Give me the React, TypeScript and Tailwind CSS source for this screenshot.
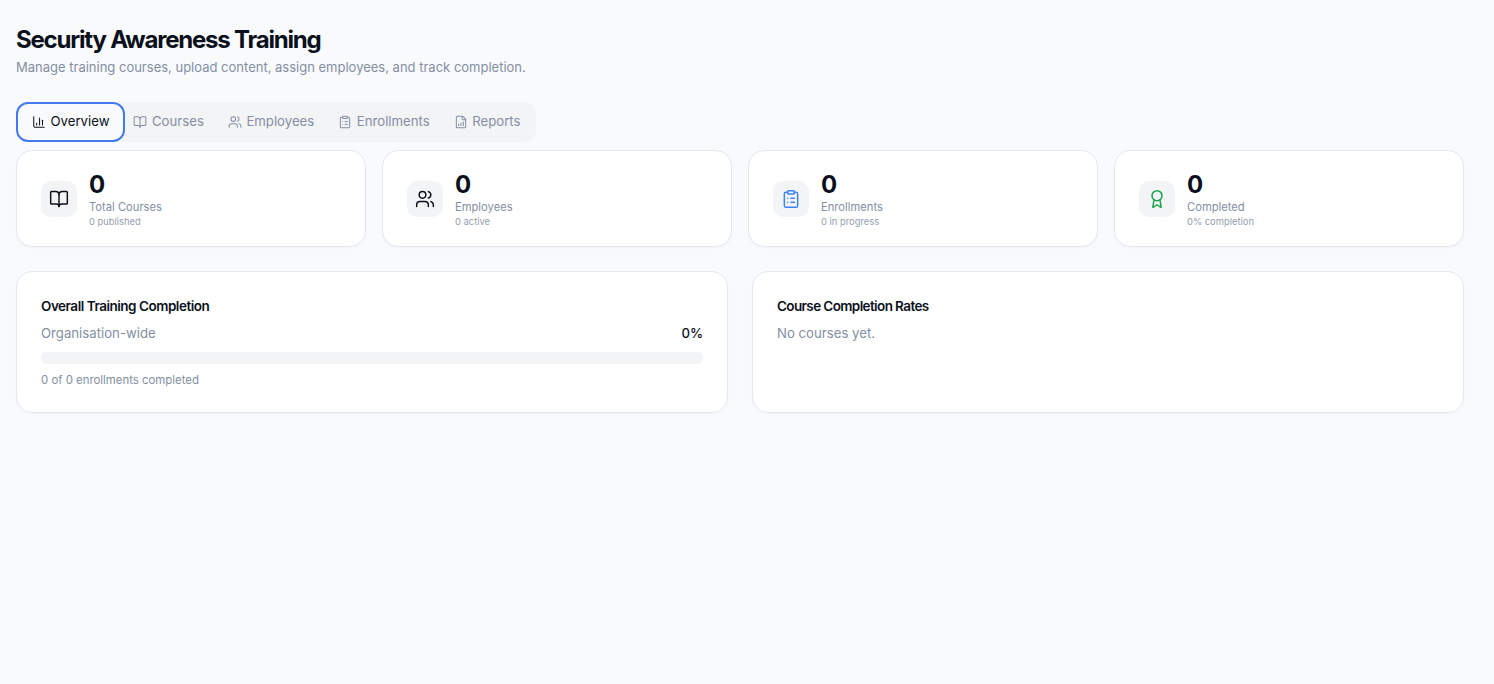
import { BarChart3, BookOpen, Users, ClipboardList, FileBarChart, Award, LucideIcon } from 'lucide-react';

const tabs: { label: string; icon: LucideIcon; active?: boolean }[] = [
  { label: 'Overview', icon: BarChart3, active: true },
  { label: 'Courses', icon: BookOpen },
  { label: 'Employees', icon: Users },
  { label: 'Enrollments', icon: ClipboardList },
  { label: 'Reports', icon: FileBarChart },
];

const stats: { label: string; sub: string; icon: LucideIcon; color: string }[] = [
  { label: 'Total Courses', sub: '0 published', icon: BookOpen, color: 'text-[#0b111c]' },
  { label: 'Employees', sub: '0 active', icon: Users, color: 'text-[#0b111c]' },
  { label: 'Enrollments', sub: '0 in progress', icon: ClipboardList, color: 'text-[#3b82f6]' },
  { label: 'Completed', sub: '0% completion', icon: Award, color: 'text-[#16a34a]' },
];

const cardClass = 'rounded-2xl border border-[#e4e8ef] bg-white shadow-[0_1px_2px_rgba(0,0,0,0.03)]';

export default function App() {
  return (
    <div className="min-h-[684px] bg-[#f9fafc] pl-4 pr-[30px] pt-[25px] font-['Inter',sans-serif] text-[#0b111c]">
      <h1 className="text-2xl leading-[30px] font-bold tracking-[-0.05em]">Security Awareness Training</h1>
      <p className="mt-[2px] text-[13px] leading-5 text-[#858fa3]">
        Manage training courses, upload content, assign employees, and track completion.
      </p>

      <div className="mt-[25px] flex h-10 w-fit items-center rounded-xl bg-[#f3f4f6] pr-1">
        {tabs.map((tab) => {
          const Icon = tab.icon;
          return (
            <button
              key={tab.label}
              className={`flex h-10 items-center gap-[4.5px] text-[13.2px] ${
                tab.active
                  ? 'mr-[-4px] rounded-xl border-2 border-[#4479ee] bg-[#f9fafc] px-[14px] text-[#0b111c]'
                  : 'px-3 text-[#858fa3]'
              }`}
            >
              <Icon className="h-[14px] w-[14px]" strokeWidth={1.75} />
              {tab.label}
            </button>
          );
        })}
      </div>

      <div className="mt-2 grid grid-cols-4 gap-4">
        {stats.map((stat) => {
          const Icon = stat.icon;
          return (
            <div key={stat.label} className={`flex h-[97px] items-center gap-3 pl-6 ${cardClass}`}>
              <div className="flex h-9 w-9 items-center justify-center rounded-[10px] bg-[#f3f4f6]">
                <Icon className={`h-5 w-5 ${stat.color}`} strokeWidth={1.75} />
              </div>
              <div className="pb-px">
                <div className="h-8 text-2xl leading-[34px] font-bold">0</div>
                <div className="-mt-px text-[11.2px] leading-4 text-[#858fa3]">{stat.label}</div>
                <div className="text-[9.4px] leading-[13px] text-[#949eae]">{stat.sub}</div>
              </div>
            </div>
          );
        })}
      </div>

      <div className="mt-6 grid grid-cols-2 gap-6">
        <div className={`h-[142px] px-6 pt-6 ${cardClass}`}>
          <h2 className="text-[13.5px] leading-5 font-semibold tracking-[-0.035em]">Overall Training Completion</h2>
          <div className="mt-[7px] flex items-center justify-between text-[13.2px] leading-5">
            <span className="text-[#858fa3]">Organisation-wide</span>
            <span className="font-medium">0%</span>
          </div>
          <div className="mt-[9px] h-3 rounded-full bg-[#f3f4f6]" />
          <p className="mt-2 text-[11.4px] leading-4 text-[#858fa3]">0 of 0 enrollments completed</p>
        </div>
        <div className={`h-[142px] px-6 pt-6 ${cardClass}`}>
          <h2 className="text-[13.5px] leading-5 font-semibold tracking-[-0.045em]">Course Completion Rates</h2>
          <p className="mt-[7px] text-[13.2px] leading-5 text-[#858fa3]">No courses yet.</p>
        </div>
      </div>
    </div>
  );
}
